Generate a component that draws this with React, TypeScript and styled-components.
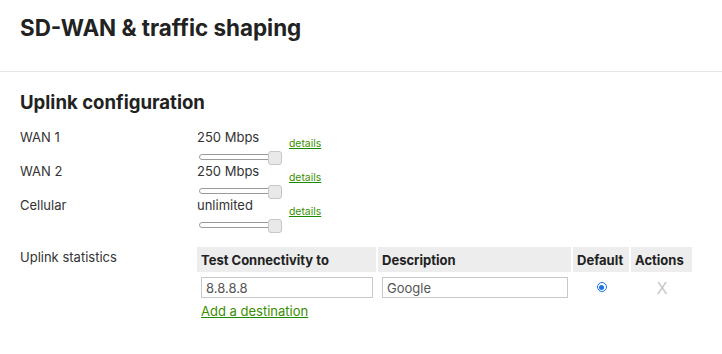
import React from "react";
import styled, { createGlobalStyle } from "styled-components";

const Global = createGlobalStyle`
  html, body { margin: 0; padding: 0; background: #fff; }
  body { font-family: Inter, "Noto Sans", Arial, sans-serif; color: #333; }
  * { box-sizing: border-box; }
`;

const Page = styled.div`
  width: 722px;
  min-height: 354px;
  background: #fff;
`;

const Header = styled.header`
  height: 72px;
  padding: 14px 20px 0;
  border-bottom: 1px solid #e6e6e6;
`;

const Title = styled.h1`
  margin: 0;
  font-size: 22.4px;
  line-height: 28px;
  font-weight: 700;
  color: #222;
`;

const Section = styled.section`
  padding: 18px 20px 0;
`;

const SectionTitle = styled.h2`
  margin: 0 0 15px;
  font-size: 18.6px;
  line-height: 24px;
  font-weight: 700;
  color: #222;
`;

const UplinkRow = styled.div`
  display: grid;
  grid-template-columns: 177px 92px auto;
  height: 34px;
  font-size: 13px;
`;

const Label = styled.div`
  line-height: 17px;
  color: #333;
`;

const ValueCol = styled.div`
  display: flex;
  flex-direction: column;
`;

const Value = styled.div`
  line-height: 17px;
  height: 17px;
  color: #333;
`;

const SliderBox = styled.div`
  width: 86px;
  height: 17px;
  padding: 0 2px;
`;

const Track = styled.div`
  position: relative;
  margin-top: 8px;
  height: 6px;
  border: 1px solid #9a9a9a;
  border-radius: 3px;
  background: #fff;
`;

const Thumb = styled.div`
  position: absolute;
  top: -4px;
  width: 14px;
  height: 14px;
  margin-left: -12px;
  border: 1px solid #c6c6c6;
  border-radius: 3px;
  background: #e9e9e9;
`;

const DetailsLink = styled.a`
  align-self: start;
  padding-top: 9px;
  font-size: 10.4px;
  line-height: 12px;
  color: #3a8f00;
  text-decoration: underline;
  text-decoration-color: #1c8a00;
`;

const StatsRow = styled.div`
  display: grid;
  grid-template-columns: 177px auto;
  margin-top: 16px;
  font-size: 13px;
`;

const StatsLabel = styled(Label)`
  padding-top: 2px;
`;

const Table = styled.table`
  border-collapse: separate;
  border-spacing: 2px;
  margin: -2px 0 0 -2px;
  table-layout: fixed;
  width: 499px;
`;

const Th = styled.th`
  height: 25px;
  padding: 0 3px 0 4px;
  background: #ededed;
  text-align: left;
  font-size: 13px;
  font-weight: 700;
  color: #222;
  white-space: nowrap;
`;

const Td = styled.td<{ $center?: boolean }>`
  padding: 3px 3px 3px 4px;
  text-align: ${(p) => (p.$center ? "center" : "left")};
  vertical-align: top;
`;

const TextInput = styled.input`
  display: block;
  width: 100%;
  height: 21px;
  padding: 0 4px;
  border: 1px solid #c8c8c8;
  border-radius: 0;
  font-family: Inter, "Noto Sans", Arial, sans-serif;
  font-size: 13px;
  color: #555;
  outline: none;
`;

const Radio = styled.span`
  display: inline-block;
  margin-top: 5px;
  width: 10px;
  height: 10px;
  border-radius: 50%;
  border: 1.5px solid #1a73e8;
  background: #fff;
  position: relative;
  &::after {
    content: "";
    position: absolute;
    inset: 1.5px;
    border-radius: 50%;
    background: #1a73e8;
  }
`;

const RemoveButton = styled.span`
  display: inline-block;
  padding-top: 3px;
  font-family: "Liberation Sans", Arial, sans-serif;
  font-size: 16px;
  line-height: 18px;
  color: #c4c4c4;
`;

const AddLink = styled.a`
  display: inline-block;
  margin-left: 4px;
  font-size: 13px;
  line-height: 17px;
  color: #3a8f00;
  text-decoration: underline;
  text-decoration-color: #1c8a00;
`;

type Uplink = { name: string; value: string; pct: number };

const uplinks: Uplink[] = [
  { name: "WAN 1", value: "250 Mbps", pct: 100 },
  { name: "WAN 2", value: "250 Mbps", pct: 100 },
  { name: "Cellular", value: "unlimited", pct: 100 },
];

export default function App() {
  return (
    <Page>
      <Global />
      <Header>
        <Title>SD-WAN &amp; traffic shaping</Title>
      </Header>
      <Section>
        <SectionTitle>Uplink configuration</SectionTitle>
        {uplinks.map((u) => (
          <UplinkRow key={u.name}>
            <Label>{u.name}</Label>
            <ValueCol>
              <Value>{u.value}</Value>
              <SliderBox>
                <Track>
                  <Thumb style={{ left: `${u.pct}%` }} />
                </Track>
              </SliderBox>
            </ValueCol>
            <DetailsLink href="#">details</DetailsLink>
          </UplinkRow>
        ))}
        <StatsRow>
          <StatsLabel>Uplink statistics</StatsLabel>
          <div>
            <Table>
              <colgroup>
                <col style={{ width: 179 }} />
                <col style={{ width: 193 }} />
                <col style={{ width: 56 }} />
                <col style={{ width: 61 }} />
              </colgroup>
              <thead>
                <tr>
                  <Th>Test Connectivity to</Th>
                  <Th>Description</Th>
                  <Th>Default</Th>
                  <Th>Actions</Th>
                </tr>
              </thead>
              <tbody>
                <tr>
                  <Td>
                    <TextInput defaultValue="8.8.8.8" />
                  </Td>
                  <Td>
                    <TextInput defaultValue="Google" />
                  </Td>
                  <Td $center>
                    <Radio />
                  </Td>
                  <Td $center>
                    <RemoveButton>X</RemoveButton>
                  </Td>
                </tr>
              </tbody>
            </Table>
            <AddLink href="#">Add a destination</AddLink>
          </div>
        </StatsRow>
      </Section>
    </Page>
  );
}
